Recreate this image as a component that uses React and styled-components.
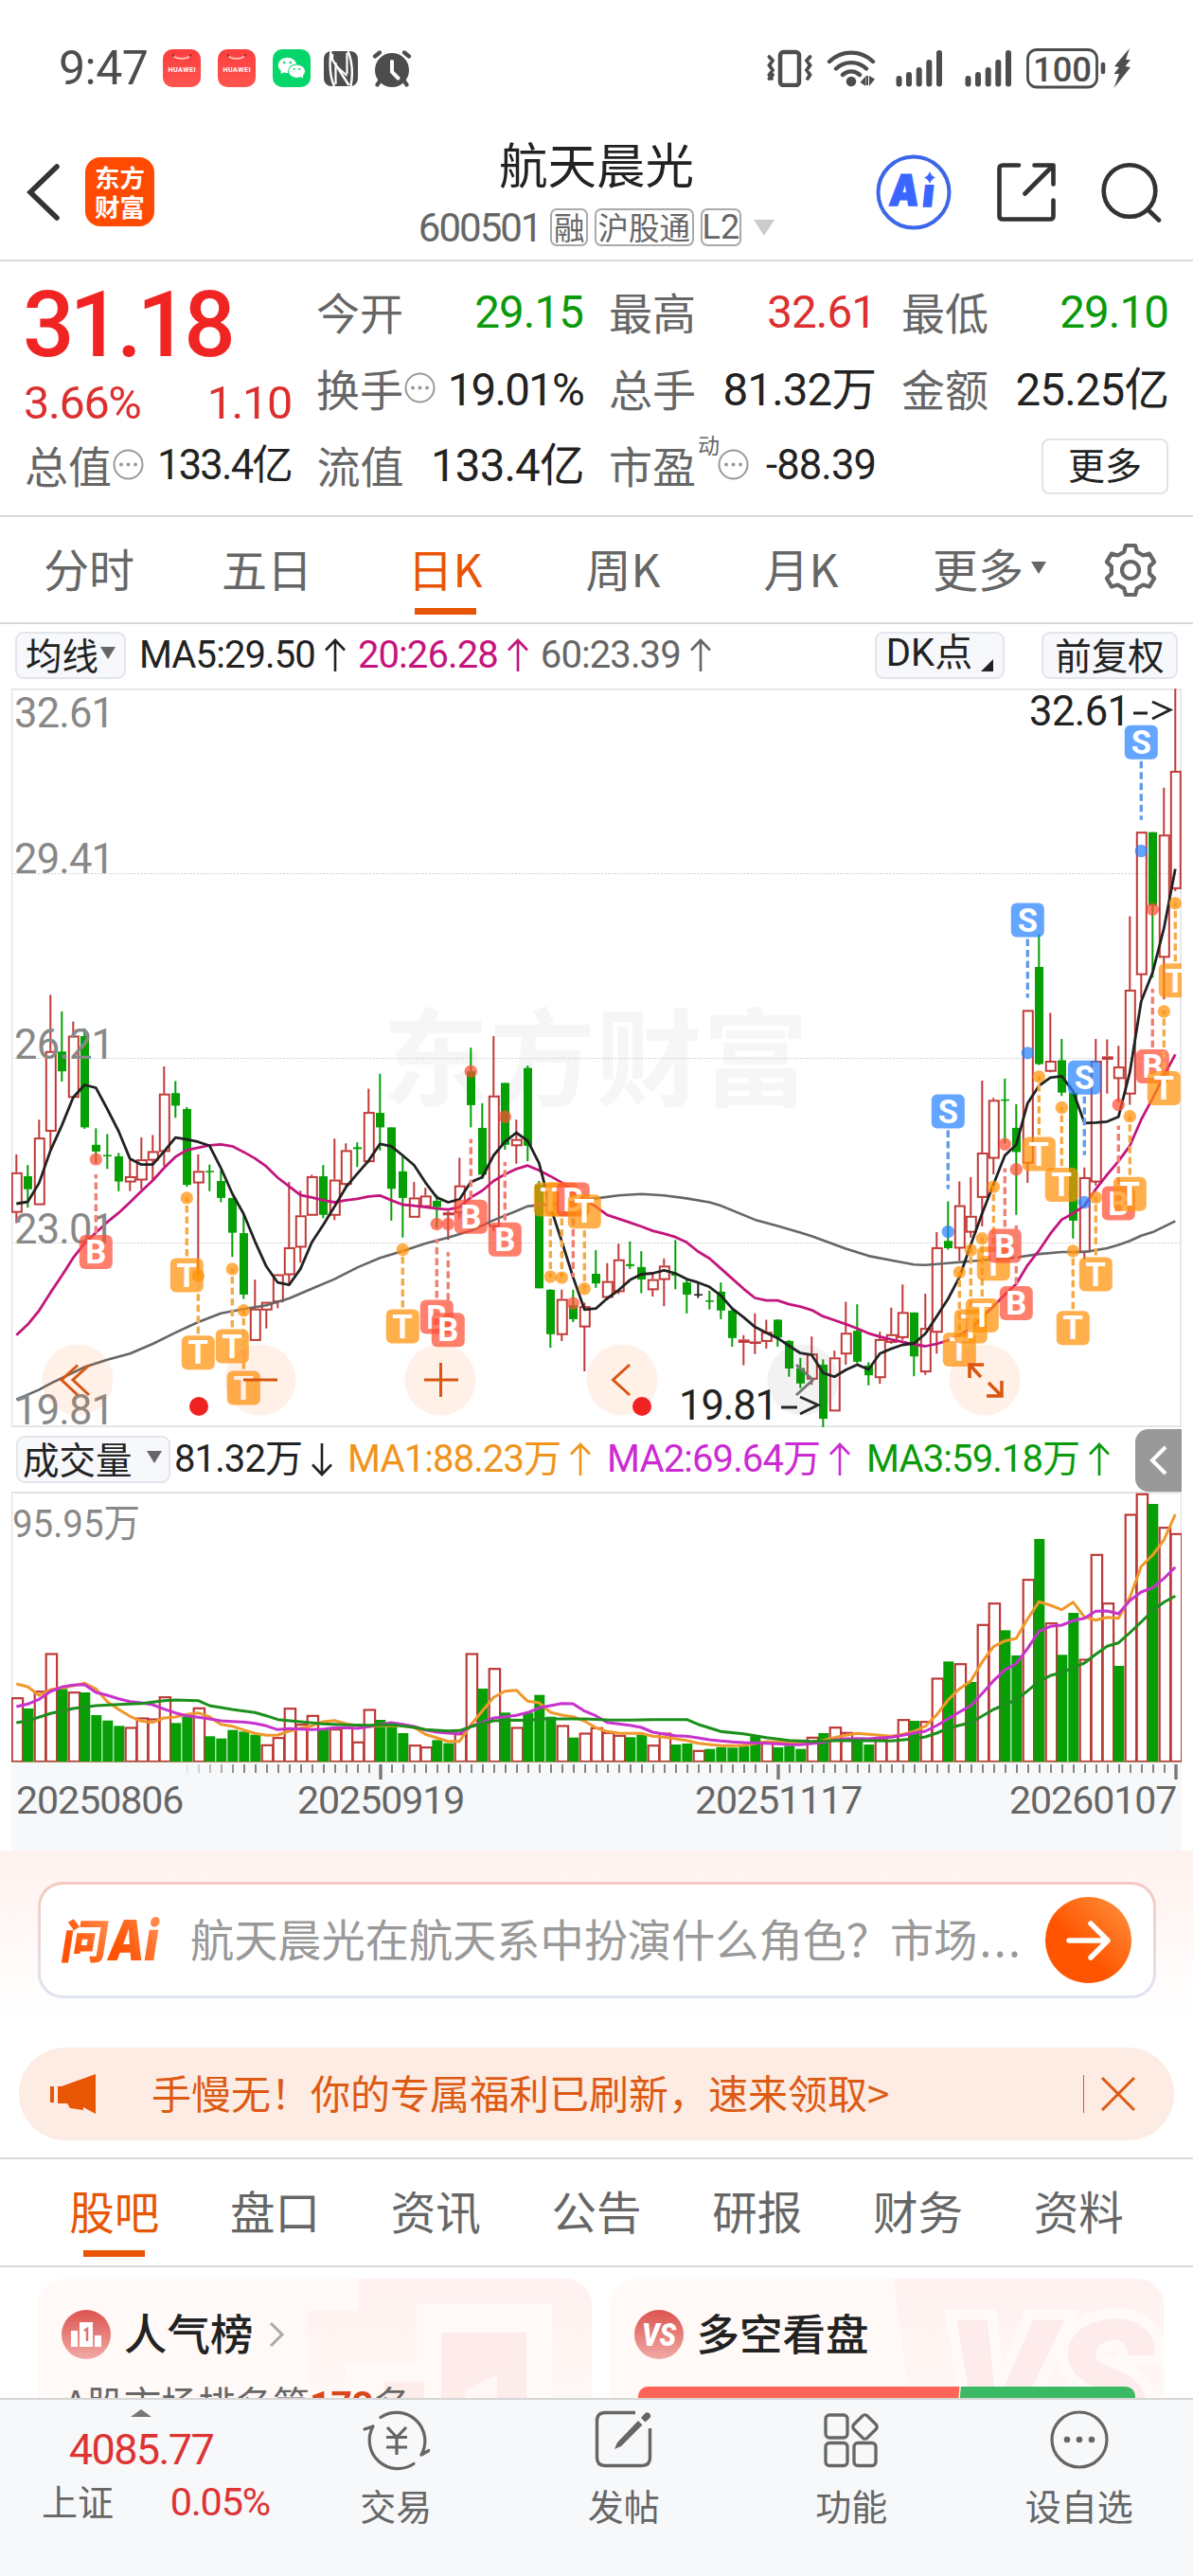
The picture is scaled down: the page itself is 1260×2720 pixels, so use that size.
import React from 'react'
import styled, { createGlobalStyle } from 'styled-components'

const cjk = `'Noto Sans CJK SC', sans-serif`
const latin = `Roboto, 'Noto Sans CJK SC', sans-serif`

const GREEN = '#0b9a0b'
const RED = '#dc3030'
const ORANGE = '#e85505'

const STEP = 12
const FIRST_X = 17.3
const xAt = (i) => FIRST_X + i * STEP
// candle values are stored in chart units, one unit is 1 / 1.96 px
const priceY = (v) => 720 + v / 1.96
const volumeY = (v) => 1500 + v / 3

// kind, high, body top, body bottom, low
const candles = `
r 978 1015 1098 1120|g 1000 1023 1050 1088|r 906 943 1082 1082|r 648 764 930 968|g 682 765 806 827|
r 703 732 860 860|g 717 733 922 925|g 924 958 972 996|g 936 979 982 1008|g 975 982 1034 1054|
r 990 1023 1035 1054|r 943 988 1031 1050|r 938 971 990 1033|r 796 852 972 1002|g 826 851 877 902|
g 880 884 1041 1045|r 978 1012 1037 1228|g 999 1012 1015 1054|g 1010 1033 1068 1077|g 1068 1068 1140 1190|
g 1100 1141 1268 1277|r 1237 1297 1363 1363|r 1283 1283 1300 1338|r 1225 1226 1283 1296|r 1035 1170 1227 1245|
r 1053 1104 1170 1202|r 1020 1023 1104 1104|g 1000 1023 1103 1110|r 945 1030 1104 1114|r 955 969 1040 1046|
g 953 963 967 1004|r 842 890 993 995|g 811 892 922 970|g 922 922 1049 1115|g 980 1013 1068 1150|
r 1035 1067 1108 1108|r 1047 1063 1086 1086|g 1062 1074 1087 1130|r 1095 1098 1103 1155|r 985 1042 1099 1110|
g 757 806 876 922|g 872 923 1020 1029|r 733 856 1127 1137|g 830 830 958 968|r 906 946 960 997|
g 794 799 960 992|g 1033 1040 1255 1255|g 1257 1258 1350 1378|r 1258 1277 1351 1364|g 1258 1290 1319 1325|
r 1285 1292 1335 1427|g 1176 1225 1245 1254|r 1203 1240 1274 1280|r 1163 1195 1262 1267|g 1158 1205 1209 1215|
g 1178 1211 1237 1265|r 1225 1236 1258 1272|r 1193 1208 1237 1292|g 1155 1225 1229 1257|g 1238 1243 1268 1307|
k 1243 1267 1270 1275|g 1260 1280 1283 1299|g 1243 1262 1301 1319|g 1297 1301 1358 1376|r 1352 1361 1367 1414|
r 1307 1365 1367 1391|r 1320 1345 1365 1380|g 1319 1320 1357 1376|g 1362 1364 1421 1438|g 1399 1420 1452 1462|
r 1355 1390 1443 1455|g 1402 1413 1525 1543|r 1384 1398 1509 1509|r 1283 1347 1391 1413|g 1288 1343 1407 1410|
g 1408 1415 1435 1456|r 1345 1360 1440 1453|r 1295 1350 1367 1370|r 1247 1304 1357 1362|g 1305 1305 1396 1437|
r 1266 1337 1428 1434|r 1139 1170 1346 1390|g 1075 1157 1172 1175|r 1034 1083 1172 1198|r 1025 1105 1139 1150|
r 825 974 1067 1127|r 861 865 986 1019|g 821 864 867 955|g 874 923 973 1103|r 678 679 996 1037|
g 522 590 791 793|r 685 784 806 808|g 739 783 850 857|g 850 850 1115 1152|r 1005 1025 1180 1195|
r 739 784 1035 1042|r 740 775 781 852|r 753 796 821 870|r 485 637 853 875|r 310 310 606 655|
g 311 311 463 612|r 219 316 570 657|r 14 184 428 433`
  .split('|')
  .map((row) => {
    const [kind, ...v] = row.trim().split(' ')
    return [kind, ...v.map(Number)]
  })

const volumes =
  `r878 g912 r857 r738 g850 r860 g861 g933 g950 g967 r972 r942 r945 r875 g958 g938 r910 g1000 g1007 g980 g985 g995
r1027 r1004 r911 r962 r934 g978 r977 r973 r1018 r915 g948 g965 g990 r1028 r1034 g1012 g1022 r992 r738 g849 r785 g925
r972 g925 g869 g938 r966 g1004 r990 r973 r988 r997 g1003 g995 r1028 r990 g1026 g1023 r1045 g1040 g1035 g1036 g1032
g1000 r1017 g1035 g1030 g1040 r1003 g990 r971 r988 g1015 g1026 r1010 r1000 r947 g951 r953 r816 g763 r770 g828 r646
r578 g664 g744 r503 g375 r641 g742 g609 r756 r424 r578 g777 r297 r232 g264 r338 r358`
    .split(/\s+/)
    .map((s) => [s[0], Number(s.slice(1))])

const ma5 = [
  1080, 1076, 1037, 970, 918, 860, 834, 840, 884, 930, 987, 999, 999, 972, 943, 947, 952, 960, 1006, 1059, 1101, 1158,
  1210, 1243, 1248, 1215, 1160, 1124, 1086, 1046, 1018, 991, 956, 961, 980, 1000, 1036, 1067, 1077, 1071, 1035, 1025,
  980, 952, 933, 950, 996, 1086, 1158, 1232, 1299, 1297, 1276, 1259, 1238, 1226, 1224, 1218, 1224, 1236, 1243, 1252,
  1270, 1297, 1315, 1335, 1347, 1358, 1374, 1389, 1393, 1430, 1438, 1424, 1413, 1423, 1390, 1380, 1372, 1369, 1349,
  1313, 1277, 1232, 1165, 1100, 1040, 980, 958, 872, 836, 819, 816, 847, 913, 912, 910, 900, 808, 661, 602, 510, 387,
].map((v, i) => [i, v])
const ma20 = [
  1352, 1330, 1301, 1264, 1229, 1192, 1162, 1140, 1118, 1099, 1077, 1054, 1032, 1006, 983, 969, 964, 959, 957, 961, 973,
  986, 1003, 1026, 1044, 1062, 1067, 1073, 1077, 1073, 1070, 1065, 1063, 1073, 1082, 1084, 1087, 1090, 1092, 1087, 1067,
  1053, 1033, 1019, 1008, 1001, 1011, 1023, 1036, 1054, 1072, 1086, 1103, 1111, 1119, 1127, 1136, 1142, 1149, 1160,
  1179, 1193, 1214, 1235, 1256, 1275, 1280, 1280, 1288, 1293, 1300, 1313, 1321, 1329, 1338, 1348, 1355, 1361, 1366, 1371,
  1375, 1370, 1363, 1352, 1338, 1315, 1292, 1268, 1246, 1207, 1177, 1142, 1113, 1100, 1084, 1050, 1020, 992, 960, 906,
  862, 815, 771,
].map((v, i) => [i, v])
const ma60 = [
  [0, 1485], [1, 1475], [2, 1465], [3, 1452], [6, 1418], [8, 1403], [10, 1390], [12, 1370], [14, 1347], [16, 1325],
  [18, 1307], [20, 1298], [22, 1290], [24, 1276], [26, 1256], [28, 1236], [30, 1212], [32, 1192], [34, 1178],
  [36, 1162], [38, 1150], [40, 1136], [42, 1114], [44, 1095], [45, 1085], [48, 1079], [51, 1069], [53, 1063],
  [55, 1060], [57, 1063], [59, 1069], [61, 1077], [62, 1084], [65, 1113], [67, 1126], [69, 1140], [70, 1147],
  [73, 1173], [75, 1188], [77, 1197], [79, 1206], [80, 1207], [82, 1203], [84, 1199], [86, 1195], [88, 1191],
  [90, 1184], [92, 1180], [94, 1180], [96, 1172], [97, 1165], [98, 1157], [99, 1146], [100, 1139], [102, 1116],
]
const vol5 = [
  834, 843, 870, 852, 847, 840, 832, 850, 890, 915, 937, 952, 956, 942, 939, 931, 926, 938, 962, 968, 980, 991, 997, 996,
  984, 975, 967, 954, 950, 960, 966, 970, 966, 967, 967, 972, 994, 1005, 1016, 1016, 964, 920, 877, 857, 854, 889, 894,
  924, 933, 938, 952, 973, 985, 990, 991, 991, 1000, 1003, 1008, 1013, 1022, 1026, 1030, 1030, 1029, 1023, 1017, 1018,
  1020, 1020, 1020, 1013, 1004, 997, 991, 994, 997, 1000, 994, 985, 968, 932, 885, 850, 825, 765, 716, 698, 690, 628,
  574, 585, 599, 575, 622, 632, 623, 626, 560, 462, 426, 378, 297,
].map((v, i) => [i, v])
const vol10 = [
  906, 898, 883, 858, 844, 838, 836, 861, 870, 881, 890, 894, 900, 914, 926, 935, 940, 945, 951, 953, 955, 959, 967,
  979, 976, 977, 979, 977, 973, 973, 975, 970, 962, 957, 962, 969, 980, 987, 990, 992, 968, 957, 942, 938, 934, 925, 910,
  903, 896, 897, 920, 935, 956, 961, 965, 972, 987, 993, 998, 1000, 1005, 1011, 1015, 1018, 1020, 1021, 1022, 1024, 1026,
  1027, 1023, 1019, 1012, 1008, 1007, 1008, 1005, 1003, 997, 990, 984, 966, 945, 923, 903, 865, 824, 790, 770, 722, 668,
  652, 648, 634, 626, 604, 603, 612, 570, 543, 530, 500, 464,
].map((v, i) => [i, v])
const vol20 = [
  [0, 957], [1, 951], [3, 928], [5, 912], [7, 903], [9, 899], [11, 896], [13, 887], [14, 885], [16, 887], [17, 903],
  [19, 915], [21, 925], [22, 935], [23, 947], [25, 954], [27, 961], [29, 964], [31, 965], [33, 963], [35, 972],
  [36, 979], [38, 983], [39, 982], [40, 970], [41, 960], [42, 951], [44, 949], [45, 950], [46, 945], [50, 945],
  [52, 948], [54, 949], [56, 947], [59, 947], [60, 962], [62, 985], [64, 992], [66, 1004], [68, 1013], [70, 1016],
  [72, 1014], [74, 1013], [77, 1015], [79, 1008], [80, 1002], [81, 990], [82, 975], [83, 965], [84, 957], [86, 915],
  [88, 885], [89, 856], [90, 826], [91, 808], [92, 798], [93, 783], [94, 768], [95, 740], [96, 715], [97, 704],
  [98, 672], [99, 638], [100, 602], [101, 575], [102, 556],
]

// letter, candle index, dot, badge centre
const signals = [
  ['B', 7, 988, 1180], ['T', 15, 1068, 1228], ['T', 16, 1229, 1388], ['T', 19, 1215, 1375], ['T', 20, 1301, 1461],
  ['T', 34, 1175, 1334], ['B', 37, 1122, 1314], ['B', 38, 1122, 1341], ['B', 40, 806, 1107], ['B', 43, 900, 1154],
  ['T', 47, 1231, 1071], ['T', 48, 1233, 1071], ['B', 49, 1286, 1071], ['T', 50, 1256, 1096], ['S', 82, 1138, 889],
  ['T', 83, 1222, 1382], ['T', 84, 1176, 1334], ['T', 85, 1152, 1311], ['T', 86, 1045, 1204], ['B', 87, 957, 1167],
  ['B', 88, 1009, 1286], ['S', 89, 768, 493], ['T', 90, 817, 977], ['T', 92, 881, 1041], ['T', 93, 1178, 1337],
  ['S', 94, 1077, 819], ['T', 95, 1067, 1226], ['B', 97, 875, 1079], ['T', 98, 899, 1060], ['S', 99, 350, 125],
  ['B', 100, 471, 796], ['T', 101, 682, 841], ['T', 102, 458, 618],
]
const signalColor = { B: '#ff4d35', T: '#ff9208', S: '#2782ff' }
const dashColor = { B: '#f07f74', T: '#f5ab45', S: '#639de8' }

const linePoints = (data, toY) => data.map(([i, v]) => `${xAt(i)},${toY(v).toFixed(1)}`).join(' ')

const Candle = ({ data, i }) => {
  const [kind, high, top, bottom, low] = data
  const x = xAt(i)
  const y1 = priceY(top)
  const h = Math.max(priceY(bottom) - y1, 1.5)
  if (kind === 'r') {
    return (
      <g stroke="#c03a38" strokeWidth="2" fill="none">
        <path d={`M${x} ${priceY(high)}V${y1}M${x} ${y1 + h}V${priceY(low)}`} />
        <rect x={x - 4.5} y={y1 + 1} width="10" height={Math.max(h - 1.5, 0.6)} />
      </g>
    )
  }
  const color = kind === 'k' ? '#222' : '#06a006'
  return (
    <g fill={color}>
      <rect x={x - 1} y={priceY(high)} width="2" height={priceY(low) - priceY(high)} />
      <rect x={x - 4.3} y={y1} width="9" height={h} />
    </g>
  )
}

const Signal = ({ data }) => {
  const [letter, i, dot, badge] = data
  const x = xAt(i)
  const dir = dot > badge ? 1 : -1
  const by = priceY(badge)
  return (
    <g>
      <path
        d={`M${x} ${by + dir * 20}V${by + dir * 82}`}
        stroke={dashColor[letter]}
        strokeWidth="3.4"
        strokeDasharray="7.5 4"
      />
      <circle cx={x} cy={priceY(dot)} r="6.7" fill={signalColor[letter]} opacity="0.72" />
      <rect
        x={x - 17.5}
        y={by - 18}
        width="35"
        height="36"
        rx="6"
        fill={signalColor[letter]}
        opacity="0.72"
      />
      <text x={x} y={by + 12.3} textAnchor="middle" fontSize="34.5" fontWeight="700" fill="#fff" fontFamily="Roboto">
        {letter}
      </text>
    </g>
  )
}

const PriceChart = () => (
  <svg width="1236" height="780" viewBox="12 727 1236 780">
    <text x="404" y="1160" fontSize="112" fontWeight="700" fill="#f6f6f6" fontFamily="Noto Sans CJK SC" textLength="450">
      东方财富
    </text>
    {[922.5, 1117.5, 1312.5].map((y) => (
      <path key={y} d={`M12 ${y}H1248`} stroke="#d2d2d2" strokeDasharray="2 1.5" />
    ))}
    <path d="M12.5 727V1507M1247 727V1507" stroke="#e2e2e2" strokeWidth="1.5" />
    <path d="M12 727.8H1248M12 1506.3H1248" stroke="#e2e2e2" strokeWidth="2" />
    {candles.map((c, i) => (
      <Candle key={i} data={c} i={i} />
    ))}
    <g fill="none" strokeLinejoin="round">
      <polyline points={linePoints(ma60, priceY)} stroke="#666" strokeWidth="2.6" />
      <polyline points={linePoints(ma20, priceY)} stroke="#c4157d" strokeWidth="2.8" />
      <polyline points={linePoints(ma5, priceY)} stroke="#222" strokeWidth="2.8" />
    </g>
    <g fontSize="43.5" fill="#888" fontFamily="Roboto">
      {[['32.61', 768], ['29.41', 922], ['26.21', 1118], ['23.01', 1313], ['19.81', 1504]].map(([t, y]) => (
        <text key={t} x="15" y={y} textLength="106">
          {t}
        </text>
      ))}
    </g>
    {signals.map((s, i) => (
      <Signal key={i} data={s} />
    ))}
    <g fontSize="43.5" fill="#222" fontFamily="Roboto">
      <text x="1087" y="766" textLength="107">32.61</text>
      <text x="717" y="1499" textLength="105">19.81</text>
    </g>
    <path d="M1197 753H1212M1217 741L1236 749.500L1217 759M825 1486H842M845 1475L864 1483.500L845 1493" fill="none" stroke="#222" strokeWidth="2.8" />
    {[82, 275, 465, 657, 1040].map((x) => (
      <circle key={x} cx={x} cy="1457" r="37.5" fill="#ff6a1c" opacity="0.1" />
    ))}
    <circle cx="848" cy="1457" r="37.500" fill="#555" opacity="0.08" />
    <g fill="none" stroke="#d8560f" strokeWidth="3">
      <path d="M82 1441.500L65 1457L82 1473M94 1441.500L77 1457L94 1473" />
      <path d="M257 1457H293M448 1457H484M465.500 1439V1475" />
      <path d="M665 1441L647.500 1457L665 1473" />
      <path d="M1024 1455V1441H1039M1024 1441L1036 1454M1058 1458V1474H1042M1058 1474L1044 1460" strokeWidth="3.5" />
    </g>
    <path d="M841 1441L858.500 1457L841 1473" fill="none" stroke="#777" strokeWidth="3" />
    <circle cx="210" cy="1485" r="10" fill="#f02222" />
    <circle cx="678" cy="1485" r="10" fill="#f02222" />
  </svg>
)

const VolumeChart = () => (
  <svg width="1236" height="286" viewBox="12 1575 1236 286">
    <path d="M12 1576H1248" stroke="#e2e2e2" strokeWidth="2" />
    <path d="M12.500 1576V1861M1247.500 1576V1861" stroke="#e2e2e2" strokeWidth="1.500" />
    {volumes.map(([kind, v], i) =>
      kind === 'r' ? (
        <rect
          key={i}
          x={xAt(i) - 4.6}
          y={volumeY(v) + 0.5}
          width="11.4"
          height={1859.5 - volumeY(v)}
          fill="#fff"
          stroke="#bc3a38"
          strokeWidth="2.2"
        />
      ) : (
        <rect key={i} x={xAt(i) - 5} y={volumeY(v)} width="11" height={1860 - volumeY(v)} fill="#06a006" />
      )
    )}
    <path d="M12 1860.500H1248" stroke="#b08a68" strokeWidth="1" />
    <g fill="none" strokeWidth="3" strokeLinejoin="round">
      <polyline points={linePoints(vol5, volumeY)} stroke="#f0982a" />
      <polyline points={linePoints(vol10, volumeY)} stroke="#c733cc" />
      <polyline points={linePoints(vol20, volumeY)} stroke="#1c8f1c" />
    </g>
    <text x="13" y="1623" fontSize="41" fill="#888" fontFamily="Roboto, Noto Sans CJK SC" textLength="135" lengthAdjust="spacingAndGlyphs">
      95.95万
    </text>
  </svg>
)

const Ticks = () => (
  <svg width="1236" height="22" viewBox="12 1861 1236 22">
    {Array.from({ length: 88 }, (_, k) => k + 15).map((i) => {
      const big = i === 32 || i === 67 || i === 102
      return (
        <path
          key={i}
          d={`M${xAt(i) + 0.7} 1863V${big ? 1879 : 1872}`}
          stroke="#777"
          strokeWidth={big ? 3.4 : 1.8}
          opacity={Math.min(1, (i - 14) / 6)}
        />
      )
    })}
  </svg>
)

const Arrow = ({ color, down }) => (
  <svg width="22" height="36" viewBox="0 0 22 36">
    <path
      d={down ? 'M11 1V34M1 23.500L11 34L21 23.500' : 'M11 35V2M1 12.500L11 2L21 12.500'}
      fill="none"
      stroke={color}
      strokeWidth="2.6"
    />
  </svg>
)

const Info = () => (
  <svg width="33" height="33" viewBox="0 0 33 33">
    <circle cx="16.500" cy="16.500" r="15" fill="none" stroke="#999" strokeWidth="2" />
    <g fill="#999">
      <circle cx="9" cy="16.500" r="2" />
      <circle cx="16.500" cy="16.500" r="2" />
      <circle cx="24" cy="16.500" r="2" />
    </g>
  </svg>
)

const HuaweiIcon = () => (
  <svg width="40" height="40" viewBox="0 0 40 40">
    <defs>
      <linearGradient id="hw" x1="0" y1="0" x2="0" y2="1">
        <stop offset="0" stopColor="#fb3f3d" />
        <stop offset="1" stopColor="#ff5550" />
      </linearGradient>
    </defs>
    <rect width="40" height="40" rx="10" fill="url(#hw)" />
    <path d="M11 6.500C14 11 26 11 29 6.500" fill="none" stroke="#ffc4c0" strokeWidth="1.600" />
    <circle cx="11" cy="6.500" r="1.400" fill="#b52a2a" />
    <circle cx="29" cy="6.500" r="1.400" fill="#b52a2a" />
    <text x="20" y="24" textAnchor="middle" fontSize="7.200" fontWeight="700" fill="#fff" fontFamily="Roboto" textLength="29">
      HUAWEI
    </text>
  </svg>
)

const WechatIcon = () => (
  <svg width="40" height="40" viewBox="0 0 40 40">
    <rect width="40" height="40" rx="10" fill="#05d66b" />
    <path d="M9 21L8.500 26L13 24Z" fill="#fff" />
    <ellipse cx="15.500" cy="17" rx="9.800" ry="8.300" fill="#fff" />
    <ellipse cx="25.500" cy="23.200" rx="9.500" ry="7.800" fill="#05d66b" />
    <ellipse cx="25.500" cy="23.200" rx="8.500" ry="6.800" fill="#fff" />
    <path d="M29 28L32 31L32 26Z" fill="#fff" />
    <g fill="#05d66b">
      <circle cx="12.200" cy="14" r="1.300" />
      <circle cx="18.800" cy="14" r="1.300" />
      <circle cx="22.800" cy="21" r="1.100" />
      <circle cx="28.300" cy="21" r="1.100" />
    </g>
  </svg>
)

const NfcIcon = () => (
  <svg width="36" height="37" viewBox="0 0 36 37">
    <rect width="36" height="37" rx="8" fill="#4d4d4d" />
    <path d="M7.500 0C6 12 6 26 11 37M9 3V9L26.500 36M25.500 0C30.500 12 30.500 26 28.500 37" fill="none" stroke="#fff" strokeWidth="2.400" />
    <path d="M12.500 12V35M24.500 2V24" stroke="#fff" strokeWidth="2.200" />
    <path d="M12.500 15L24.500 26" stroke="#fff" strokeWidth="1.800" />
  </svg>
)

const AlarmIcon = () => (
  <svg width="42" height="40" viewBox="0 0 42 40">
    <circle cx="21" cy="22" r="18" fill="#4d4d4d" />
    <g stroke="#4d4d4d" strokeWidth="4.200" strokeLinecap="round" fill="none">
      <path d="M3 7.500L8 3.500M39 7.500L34 3.500M8.500 33L5.500 37.500M33.500 33L36.500 37.500" />
    </g>
    <path d="M21 13V24L27.500 30.500" stroke="#fff" strokeWidth="4" strokeLinecap="round" fill="none" />
  </svg>
)

const VibrateIcon = () => (
  <svg width="48" height="40" viewBox="0 0 48 40">
    <rect x="14" y="3" width="20" height="35" rx="3.500" fill="none" stroke="#4d4d4d" strokeWidth="4.500" />
    <path d="M2.500 8L6 12L2.500 17L6 22L2.500 27L5 31M2.500 31L6 27M45.500 8L42 12L45.500 17L42 22L45.500 27L43 31" fill="none" stroke="#4d4d4d" strokeWidth="3.800" strokeLinecap="round" />
  </svg>
)

const WifiIcon = () => (
  <svg width="52" height="40" viewBox="0 0 52 40">
    <g fill="none" stroke="#4d4d4d" strokeWidth="4.400" strokeLinecap="round">
      <path d="M3 13C16 .5 36 .5 49 13M10 20.500C19 12 33 12 42 20.500M17 27C22.500 22.300 29.500 22.300 35 27" />
    </g>
    <circle cx="26" cy="34" r="5.300" fill="#4d4d4d" />
    <path d="M41.500 28V39L35.500 35ZM45 28L51 31.500L45 39ZM42 28H44V38H42Z" fill="#4d4d4d" />
  </svg>
)

const SignalIcon = () => (
  <svg width="50" height="40" viewBox="0 0 50 40">
    <path d="M3.500 31V36.500M14 27V36.500M24.700 22V36.500M35.300 14V36.500M46 4V36.500" stroke="#4d4d4d" strokeWidth="6" strokeLinecap="round" />
  </svg>
)

const BatteryIcon = () => (
  <svg width="112" height="43" viewBox="0 0 112 43">
    <rect x="1.500" y="1.500" width="73" height="39.500" rx="9.500" fill="none" stroke="#4d4d4d" strokeWidth="2.800" />
    <path d="M81 17V25" stroke="#4d4d4d" strokeWidth="4.500" strokeLinecap="round" />
    <text x="38" y="34.500" textAnchor="middle" fontSize="36.500" fontWeight="500" fill="#4d4d4d" fontFamily="Roboto" textLength="62" lengthAdjust="spacingAndGlyphs">
      100
    </text>
    <path d="M109 0L93 19L98 20L92.500 27H98L92.500 42L110 20L104.500 19L110 12H105Z" fill="#4d4d4d" />
  </svg>
)

const AiIcon = () => (
  <svg width="80" height="80" viewBox="0 0 80 80">
    <circle cx="40" cy="40" r="37.500" fill="none" stroke="#3d66e8" strokeWidth="4" />
    <g fill="#3a66ff" stroke="#3a66ff" strokeWidth="1.500" fontFamily="Inter" fontWeight="900" transform="skewX(-6)">
      <text x="19" y="54.500" fontSize="45" textLength="31" lengthAdjust="spacingAndGlyphs">A</text>
      <text x="54" y="55.500" fontSize="41" textLength="12" lengthAdjust="spacingAndGlyphs">ı</text>
    </g>
    <path d="M57 18Q58.500 23 63 24.500Q58.500 26 57 31Q55.500 26 51 24.500Q55.500 23 57 18Z" fill="#3a66ff" />
  </svg>
)

const ShareIcon = () => (
  <svg width="62" height="62" viewBox="0 0 62 62">
    <g fill="none" stroke="#333" strokeWidth="4.600" strokeLinecap="round" strokeLinejoin="round">
      <path d="M23 2.500H6Q2.500 2.500 2.500 6V56Q2.500 59.500 6 59.500H56Q59.500 59.500 59.500 56V39.500M39.500 2.500H59.500V22.500M59 3L29.500 32.500" />
    </g>
  </svg>
)

const SearchIcon = () => (
  <svg width="64" height="64" viewBox="0 0 64 64">
    <g fill="none" stroke="#333" strokeWidth="4.600" strokeLinecap="round">
      <circle cx="30" cy="30.500" r="27.300" />
      <path d="M49 50L61 61.500" />
    </g>
  </svg>
)

const gearPath = (() => {
  const pts = []
  for (let k = 0; k < 6; k++) {
    const a = -90 + k * 60
    ;[[20.5, -19], [26.5, -11], [26.5, 11], [20.5, 19]].forEach(([r, d]) => {
      const t = ((a + d) * Math.PI) / 180
      pts.push(`${(29 + r * Math.cos(t)).toFixed(1)},${(29 + r * Math.sin(t)).toFixed(1)}`)
    })
  }
  return `M${pts.join('L')}Z`
})()

const GearIcon = () => (
  <svg width="58" height="58" viewBox="0 0 58 58">
    <g fill="none" stroke="#666" strokeWidth="4.200" strokeLinejoin="round">
      <path d={gearPath} />
      <circle cx="29" cy="29" r="9" />
    </g>
  </svg>
)

const AskLogo = () => (
  <svg width="106" height="50" viewBox="0 0 106 50">
    <defs>
      <linearGradient id="ask" x1="0" y1="1" x2="1" y2="0">
        <stop offset="0.300" stopColor="#ff5303" />
        <stop offset="1" stopColor="#ff9a63" />
      </linearGradient>
    </defs>
    <g transform="skewX(-9)" fill="url(#ask)" fontWeight="900">
      <text x="4.500" y="43.500" fontSize="49" fontFamily="Noto Sans CJK SC">问</text>
      <text x="54" y="46" fontSize="59" fontFamily="Inter" textLength="53" lengthAdjust="spacingAndGlyphs">Ai</text>
    </g>
  </svg>
)

const MegaphoneIcon = () => (
  <svg width="50" height="44" viewBox="0 0 50 44">
    <path d="M1 14H5V31H1ZM9 14H13L49 1V43L36 36V39L22 37L19 32H9Z" fill={ORANGE} />
  </svg>
)

const TradeIcon = () => (
  <svg width="72" height="66" viewBox="0 0 72 66">
    <g fill="none" stroke="#666" strokeWidth="3.200" strokeLinecap="round" strokeLinejoin="round">
      <path d="M20 9.500A30 30 0 0 1 63 49M63 49L71 44.500" />
      <path d="M55 58.500A30 30 0 0 1 12 19M12 19L3 22" />
      <path d="M27 20L37 30.500L47 20M26 30.500H48M26 41H48M37 30.500V49" strokeLinecap="butt" />
    </g>
  </svg>
)

const PostIcon = () => (
  <svg width="62" height="62" viewBox="0 0 62 62">
    <path d="M43 2.500H11Q2.500 2.500 2.500 11V50Q2.500 58.500 11 58.500H50Q58.500 58.500 58.500 50V19" fill="none" stroke="#666" strokeWidth="3.400" />
    <path d="M46 11L50.500 15.500L28 38L21 41L24 34ZM49 8L53 3.500Q56 1 58 3.500Q60.500 6 58 8.500L53.500 12.500Z" fill="#666" />
  </svg>
)

const AppsIcon = () => (
  <svg width="60" height="60" viewBox="0 0 60 60">
    <g fill="none" stroke="#666" strokeWidth="3.300">
      <rect x="3" y="4" width="23" height="24" rx="4" />
      <rect x="3" y="33.500" width="23" height="24" rx="4" />
      <rect x="33" y="33.500" width="23" height="24" rx="4" />
      <rect x="34.500" y="6.500" width="20" height="20" rx="3.500" transform="rotate(45 44.500 16.500)" />
    </g>
  </svg>
)

const MoreIcon = () => (
  <svg width="62" height="62" viewBox="0 0 62 62">
    <circle cx="31" cy="31" r="29" fill="none" stroke="#666" strokeWidth="3.200" />
    <g fill="#666">
      <circle cx="18" cy="31" r="3.300" />
      <circle cx="31" cy="31" r="3.300" />
      <circle cx="44" cy="31" r="3.300" />
    </g>
  </svg>
)

const RankIcon = () => (
  <svg width="52" height="52" viewBox="0 0 52 52">
    <defs>
      <linearGradient id="badge" x1="0" y1="0" x2="0" y2="1">
        <stop offset="0" stopColor="#dc5450" />
        <stop offset="1" stopColor="#f0aaa6" />
      </linearGradient>
    </defs>
    <circle cx="26" cy="26" r="26" fill="url(#badge)" />
    <path d="M10 22H17V39H10ZM19 13H33V39H19ZM35 27H42V39H35Z" fill="#fff" />
    <path d="M24 22L27 20V33" fill="none" stroke="#e0746f" strokeWidth="2.500" />
  </svg>
)

const VsIcon = () => (
  <svg width="52" height="52" viewBox="0 0 52 52">
    <circle cx="26" cy="26" r="26" fill="url(#badge)" />
    <text x="8" y="38" fontSize="33" fontWeight="900" fontStyle="italic" fill="#fff" fontFamily="Roboto" textLength="36" lengthAdjust="spacingAndGlyphs">
      VS
    </text>
  </svg>
)

const RankArt = () => (
  <svg width="300" height="130" viewBox="325 2406 300 130">
    <defs>
      <linearGradient id="fade" x1="0" y1="0" x2="0" y2="1">
        <stop offset="0" stopColor="#fff1ef" />
        <stop offset="1" stopColor="#fff8f6" />
      </linearGradient>
    </defs>
    <path d="M379 2406H625V2536H325V2440H379Z" fill="url(#fade)" />
    <path d="M440 2432H583V2536H365V2494H440Z" fill="#fff9f7" />
    <path d="M466 2463H556V2536H466ZM406 2515H448V2536H406Z" fill="#fdecea" />
    <path d="M491 2524L525 2507V2536H491Z" fill="#fff7f5" />
  </svg>
)

const VsArt = () => (
  <svg width="290" height="130" viewBox="940 2406 290 130">
    <path d="M945 2406H1230V2536H962Z" fill="url(#fade)" />
    <text x="1000" y="2575" fontSize="176" fontWeight="900" fontStyle="italic" fill="#fdeceb" stroke="#fffaf8" strokeWidth="22" paintOrder="stroke" fontFamily="Roboto" textLength="220" lengthAdjust="spacingAndGlyphs">
      VS
    </text>
  </svg>
)

const quotes = [
  [
    { label: '今开', value: '29.15', color: GREEN },
    { label: '最高', value: '32.61', color: RED },
    { label: '最低', value: '29.10', color: GREEN },
  ],
  [
    { label: '换手', info: true, value: '19.01%', tight: true },
    { label: '总手', value: '81.32万' },
    { label: '金额', value: '25.25亿' },
  ],
]
const periods = ['分时', '五日', '日K', '周K', '月K']
const sections = ['股吧', '盘口', '资讯', '公告', '研报', '财务', '资料']
const navItems = [
  ['交易', TradeIcon],
  ['发帖', PostIcon],
  ['功能', AppsIcon],
  ['设自选', MoreIcon],
]

const Cell = ({ item }) => (
  <QuoteCell>
    <QuoteLabel>
      {item.label}
      {item.sup && <Sup>{item.sup}</Sup>}
      {item.info && <Info />}
    </QuoteLabel>
    <QuoteValue $color={item.color} $small={item.small} $tight={item.tight}>
      {item.value}
    </QuoteValue>
  </QuoteCell>
)

const App = () => (
  <>
    <GlobalStyle />
    <Page>
      <StatusBar>
        <Clock>9:47</Clock>
        <StatusIcons $gap="18px">
          <HuaweiIcon />
          <HuaweiIcon />
          <WechatIcon />
        </StatusIcons>
        <StatusIcons $gap="15px" $left="14px">
          <NfcIcon />
          <AlarmIcon />
        </StatusIcons>
        <StatusRight>
          <VibrateIcon />
          <WifiIcon />
          <SignalIcon />
          <SignalIcon />
          <BatteryIcon />
        </StatusRight>
      </StatusBar>

      <Header>
        <HeaderSide>
          <svg width="36" height="60" viewBox="0 0 36 60">
            <path d="M32 3L4 30L32 57" fill="none" stroke="#333" strokeWidth="5.500" strokeLinecap="round" />
          </svg>
          <AppLogo>
            <span>东方</span>
            <span>财富</span>
          </AppLogo>
        </HeaderSide>
        <TitleBlock>
          <Title>航天晨光</Title>
          <SubTitle>
            <Code>600501</Code>
            <Tag>融</Tag>
            <Tag>沪股通</Tag>
            <Tag $latin>L2</Tag>
            <Triangle $w={11} $h={17} $color="#ccc" $left={6} />
          </SubTitle>
        </TitleBlock>
        <HeaderSide $right>
          <AiIcon />
          <ShareIcon />
          <SearchIcon />
        </HeaderSide>
      </Header>

      <Quote>
        <PriceColumn>
          <Price>31.18</Price>
          <Change>
            <span>3.66%</span>
            <span>1.10</span>
          </Change>
        </PriceColumn>
        <QuoteGrid>
          {quotes.flat().map((item) => (
            <Cell key={item.label} item={item} />
          ))}
        </QuoteGrid>
        <BottomRow>
          <Cell item={{ label: '总值', info: true, value: '133.4亿', small: true, tight: true }} />
          <Cell item={{ label: '流值', value: '133.4亿' }} />
          <Cell item={{ label: '市盈', sup: '动', info: true, value: '-88.39', small: true }} />
          <MoreButton>更多</MoreButton>
        </BottomRow>
      </Quote>

      <Periods>
        {periods.map((name) => (
          <Period key={name} $active={name === '日K'}>
            {name}
          </Period>
        ))}
        <Period $wide>
          更多
          <Triangle $w={8} $h={13} $color="#666" $left={8} />
        </Period>
        <GearBox>
          <GearIcon />
        </GearBox>
      </Periods>

      <IndicatorRow>
        <SmallButton $w="117px">
          均线
          <Triangle $w={8} $h={13} $color="#666" $left={2} />
        </SmallButton>
        <Indicator $color="#222" $left="14px">
          <span>MA5:29.50</span>
          <Arrow color="#222" />
        </Indicator>
        <Indicator $color="#c4157d" $left="13px">
          <span>20:26.28</span>
          <Arrow color="#c4157d" />
        </Indicator>
        <Indicator $color="#666" $left="13px">
          <span>60:23.39</span>
          <Arrow color="#666" />
        </Indicator>
        <ButtonGroup>
          <SmallButton $w="137px">
            <Indicator $color="#222" $loose>
              DK点
            </Indicator>
            <Corner />
          </SmallButton>
          <SmallButton $w="144px">前复权</SmallButton>
        </ButtonGroup>
      </IndicatorRow>

      <ChartBox>
        <PriceChart />
      </ChartBox>

      <VolumeRow>
        <SmallButton $w="163px" $start>
          成交量
          <Triangle $w={8} $h={13} $color="#666" $left={15} />
        </SmallButton>
        <Indicator $color="#222" $left="4px">
          <span>81.32万</span>
          <Arrow color="#222" down />
        </Indicator>
        <Indicator $color="#f0931c" $left="16px">
          <span>MA1:88.23万</span>
          <Arrow color="#f0931c" />
        </Indicator>
        <Indicator $color="#cb2bd3" $left="17px">
          <span>MA2:69.64万</span>
          <Arrow color="#cb2bd3" />
        </Indicator>
        <Indicator $color={GREEN} $left="17px">
          <span>MA3:59.18万</span>
          <Arrow color={GREEN} />
        </Indicator>
        <Collapse>
          <svg width="20" height="32" viewBox="0 0 20 32">
            <path d="M17 2L3 16L17 30" fill="none" stroke="#fff" strokeWidth="4" />
          </svg>
        </Collapse>
      </VolumeRow>

      <ChartBox>
        <VolumeChart />
      </ChartBox>

      <Axis>
        <Ticks />
        <AxisLabels>
          <AxisLabel>20250806</AxisLabel>
          <AxisLabel $left="121px">20250919</AxisLabel>
          <AxisLabel $left="244px">20251117</AxisLabel>
          <AxisLabel $left="156px">20260107</AxisLabel>
        </AxisLabels>
      </Axis>

      <AskSection>
        <AskCard>
          <AskLogo />
          <AskText>
            航天晨光在航天系中扮演什么角色？市场<Dots>...</Dots>
          </AskText>
          <AskButton>
            <svg width="50" height="44" viewBox="0 0 50 44">
              <path d="M4 22H44M27 4L45 22L27 40" fill="none" stroke="#fff" strokeWidth="5.500" strokeLinecap="round" strokeLinejoin="round" />
            </svg>
          </AskButton>
        </AskCard>
      </AskSection>

      <Notice>
        <MegaphoneIcon />
        <NoticeText>手慢无！你的专属福利已刷新，速来领取&gt;</NoticeText>
        <NoticeDivider />
        <svg width="36" height="36" viewBox="0 0 36 36">
          <path d="M1 1L35 35M35 1L1 35" stroke="#dd5a14" strokeWidth="3" />
        </svg>
      </Notice>

      <Sections>
        {sections.map((name) => (
          <Section key={name} $active={name === '股吧'}>
            {name}
          </Section>
        ))}
      </Sections>

      <Cards>
        <Card>
          <CardArt>
            <RankArt />
          </CardArt>
          <CardHead>
            <RankIcon />
            <CardTitle>人气榜</CardTitle>
            <svg width="18" height="28" viewBox="0 0 18 28">
              <path d="M2 2L14 14L2 26" fill="none" stroke="#aaa" strokeWidth="3" />
            </svg>
          </CardHead>
          <RankLine>
            A股市场排名第<b>173</b>名
          </RankLine>
        </Card>
        <Card>
          <CardArt>
            <VsArt />
          </CardArt>
          <CardHead>
            <VsIcon />
            <CardTitle>多空看盘</CardTitle>
          </CardHead>
          <VoteBar>
            <Vote $grow={338} $color="#ff6257" />
            <Vote $grow={186} $color="#3cb963" />
          </VoteBar>
        </Card>
      </Cards>

      <Nav>
        <IndexBox>
          <UpMark />
          <IndexValue>4085.77</IndexValue>
          <IndexRow>
            <IndexName>上证</IndexName>
            <IndexChange>0.05%</IndexChange>
          </IndexRow>
        </IndexBox>
        {navItems.map(([name, Icon]) => (
          <NavItem key={name}>
            <NavIcon>
              <Icon />
            </NavIcon>
            {name}
          </NavItem>
        ))}
      </Nav>
    </Page>
  </>
)

const GlobalStyle = createGlobalStyle`
  * {
    box-sizing: border-box;
  }
  body {
    margin: 0;
    background: #fff;
    font-family: ${cjk};
  }
  svg {
    display: block;
    flex-shrink: 0;
  }
`

const Page = styled.main`
  width: 1260px;
  height: 2720px;
  overflow: hidden;
  display: flex;
  flex-direction: column;
  background: #fff;
  > * {
    flex-shrink: 0;
  }
`

const StatusBar = styled.div`
  height: 140px;
  padding: 4px 64px 0 62px;
  display: flex;
  align-items: center;
  font-family: ${latin};
  color: #4d4d4d;
`

const Clock = styled.div`
  width: 110px;
  font-size: 50px;
  line-height: 50px;
  letter-spacing: -0.5px;
`

const StatusIcons = styled.div`
  display: flex;
  align-items: center;
  gap: ${({ $gap }) => $gap};
  margin-left: ${({ $left }) => $left || 0};
`

const StatusRight = styled.div`
  display: flex;
  align-items: center;
  margin-left: auto;
  gap: 15px;
  > :nth-child(3) {
    margin-left: 6px;
  }
  > :nth-child(4) {
    margin-left: 8px;
  }
`

const Header = styled.header`
  height: 136px;
  border-bottom: 2px solid #d9d9d9;
  display: flex;
  justify-content: space-between;
`

const HeaderSide = styled.div`
  width: 360px;
  height: 125px;
  padding: ${({ $right }) => ($right ? '0 33px 0 0' : '0 0 0 28px')};
  display: flex;
  align-items: center;
  justify-content: ${({ $right }) => ($right ? 'flex-end' : 'flex-start')};
  gap: ${({ $right }) => ($right ? '48px' : '26px')};
`

const AppLogo = styled.div`
  width: 73px;
  height: 73px;
  padding-bottom: 2px;
  border-radius: 16px;
  background: #ff4a02;
  color: #fff;
  font-size: 26.5px;
  font-weight: 700;
  line-height: 31px;
  display: flex;
  flex-direction: column;
  align-items: center;
  justify-content: center;
`

const TitleBlock = styled.div`
  display: flex;
  flex-direction: column;
  align-items: center;
`

const Title = styled.h1`
  margin: 2px 0 0 0;
  font-size: 51.5px;
  line-height: 60px;
  font-weight: 400;
  color: #222;
`

const SubTitle = styled.div`
  display: flex;
  align-items: center;
  gap: 7px;
  margin-top: 17px;
  height: 42px;
`

const Code = styled.span`
  font-family: ${latin};
  font-size: 42px;
  color: #666;
  letter-spacing: -2px;
  margin-right: 3px;
`

const Tag = styled.span`
  height: 40px;
  padding: ${({ $latin }) => ($latin ? '0' : '0 1.5px')};
  border: 2px solid #aaa;
  border-radius: 7px;
  font-family: ${({ $latin }) => ($latin ? latin : cjk)};
  font-size: ${({ $latin }) => ($latin ? '36px' : '32.5px')};
  line-height: ${({ $latin }) => ($latin ? '37px' : '33px')};
  color: #666;
`

const Triangle = styled.i`
  border: ${({ $w }) => $w}px solid transparent;
  border-top: ${({ $h }) => $h}px solid ${({ $color }) => $color};
  border-bottom: 0;
  margin-left: ${({ $left }) => $left}px;
`

const Quote = styled.section`
  height: 270px;
  border-bottom: 2px solid #d9d9d9;
  padding: 13px 26px 0 26px;
  display: grid;
  grid-template-columns: 282px 1fr;
  grid-template-rows: 163px 80px;
  column-gap: 26px;
`

const PriceColumn = styled.div`
  display: flex;
  flex-direction: column;
  color: ${RED};
  font-family: ${latin};
`

const Price = styled.div`
  margin-left: -2px;
  font-size: 96px;
  line-height: 108px;
  font-weight: 500;
  letter-spacing: -5px;
  color: #f12424;
`

const Change = styled.div`
  margin-left: -1px;
  display: flex;
  justify-content: space-between;
  font-size: 48.5px;
  line-height: 58px;
  letter-spacing: -1.3px;
`

const QuoteGrid = styled.div`
  display: grid;
  grid-template-columns: repeat(3, 282px);
  grid-template-rows: 82px 81px;
  column-gap: 27px;
`

const BottomRow = styled.div`
  grid-column: 1 / -1;
  display: grid;
  grid-template-columns: 282px 282px 282px 1fr;
  column-gap: 26.5px;
`

const QuoteCell = styled.div`
  display: flex;
  align-items: center;
  justify-content: space-between;
  white-space: nowrap;
`

const QuoteLabel = styled.div`
  display: flex;
  align-items: center;
  padding-bottom: 5px;
  font-size: 46px;
  color: #666;
  svg {
    margin: 1px 0 0 1px;
  }
`

const Sup = styled.sup`
  font-size: 23px;
  line-height: 23px;
  margin: -40px -3px 0 2px;
`

const QuoteValue = styled.div`
  font-family: ${latin};
  font-size: ${({ $small }) => ($small ? '43.5px' : '47.5px')};
  line-height: 54px;
  letter-spacing: ${({ $tight }) => ($tight ? '-1.8px' : '-0.9px')};
  color: ${({ $color }) => $color || '#222'};
`

const MoreButton = styled.button`
  justify-self: end;
  align-self: center;
  width: 134px;
  height: 59px;
  padding: 0 0 7px;
  border: 2px solid #e3e3e3;
  border-radius: 8px;
  background: #fff;
  font-family: ${cjk};
  font-size: 39px;
  line-height: 48px;
  color: #222;
`

const Periods = styled.nav`
  height: 113px;
  border-bottom: 2px solid #d9d9d9;
  padding-right: 37px;
  display: flex;
  align-items: center;
`

const Period = styled.div`
  width: ${({ $wide }) => ($wide ? '210px' : '188px')};
  height: 110px;
  padding-bottom: 5px;
  display: flex;
  align-items: center;
  justify-content: center;
  font-size: 48px;
  color: ${({ $active }) => ($active ? ORANGE : '#666')};
  background: ${({ $active }) =>
    $active ? `linear-gradient(${ORANGE}, ${ORANGE}) center bottom 8px / 65px 7px no-repeat` : 'none'};
`

const GearBox = styled.div`
  margin-left: auto;
`

const IndicatorRow = styled.div`
  height: 68px;
  padding: 0 16px 2px;
  display: flex;
  align-items: center;
`

const SmallButton = styled.button`
  width: ${({ $w }) => $w};
  height: 50px;
  padding: ${({ $start }) => ($start ? '0 0 5px 5px' : '0 0 5px')};
  border: 2px solid #e3e5ea;
  border-radius: 9px;
  background: #f7f8fb;
  font-family: ${cjk};
  font-size: 38.5px;
  line-height: 44px;
  color: #222;
  display: flex;
  align-items: center;
  justify-content: ${({ $start }) => ($start ? 'flex-start' : 'center')};
`

const Indicator = styled.div`
  display: flex;
  align-items: center;
  gap: 10px;
  margin-left: ${({ $left }) => $left || 0};
  font-family: ${latin};
  font-size: 40px;
  line-height: 46px;
  letter-spacing: ${({ $loose }) => ($loose ? '0' : '-0.9px')};
  white-space: nowrap;
  color: ${({ $color }) => $color};
`

const Corner = styled.i`
  align-self: flex-end;
  margin: 0 0 1px 9px;
  border-left: 13px solid transparent;
  border-bottom: 13px solid #222;
`

const ButtonGroup = styled.div`
  display: flex;
  margin-left: auto;
  gap: 39px;
`

const ChartBox = styled.div`
  padding: 0 12px;
`

const VolumeRow = styled.div`
  height: 68px;
  padding: 0 12px 0 17px;
  display: flex;
  align-items: center;
`

const Collapse = styled.div`
  width: 49px;
  height: 66px;
  margin: 2px 0 0 auto;
  border-radius: 14px 0 0 14px;
  background: #999;
  display: flex;
  align-items: center;
  justify-content: center;
`

const Axis = styled.div`
  height: 93px;
  margin: 0 12px;
  background: #f7f8fa;
`

const AxisLabels = styled.div`
  display: flex;
  padding-left: 5px;
`

const AxisLabel = styled.span`
  width: 176px;
  margin-left: ${({ $left }) => $left || 0};
  font-family: ${latin};
  font-size: 41px;
  line-height: 36px;
  letter-spacing: -1px;
  color: #666;
`

const AskSection = styled.section`
  height: 208px;
  padding: 33px 39px 0 40px;
  background: linear-gradient(#fff2ee, #fff 180px);
`

const AskCard = styled.div`
  height: 123px;
  padding: 0 23px 0 22px;
  border: 3px solid transparent;
  border-radius: 26px;
  background: linear-gradient(#fff, #fff) padding-box, linear-gradient(#f5c8c0, #dfe5f2) border-box;
  display: flex;
  align-items: center;
`

const AskText = styled.div`
  flex: 1;
  margin-left: 30px;
  padding-bottom: 6px;
  font-size: 46.2px;
  white-space: nowrap;
  color: #999;
`

const Dots = styled.span`
  margin-left: 2px;
  letter-spacing: 2.5px;
`

const AskButton = styled.div`
  width: 91px;
  height: 91px;
  border-radius: 50%;
  background: linear-gradient(45deg, #ff5500 40%, #ff9440);
  display: flex;
  align-items: center;
  justify-content: center;
`

const Notice = styled.div`
  height: 98px;
  margin: 0 20px;
  padding: 0 41px 0 32px;
  border-radius: 49px;
  background: #fcece3;
  display: flex;
  align-items: center;
`

const NoticeText = styled.div`
  flex: 1;
  margin-left: 58px;
  padding-bottom: 5px;
  font-size: 42px;
  color: #dd5a14;
`

const NoticeDivider = styled.i`
  width: 1.5px;
  height: 40px;
  margin-right: 18px;
  background: #dd5a14;
`

const Sections = styled.nav`
  height: 116px;
  margin-top: 18px;
  padding: 0 36px 0 36px;
  border-top: 2px solid #d9d9d9;
  border-bottom: 2px solid #d9d9d9;
  display: flex;
`

const Section = styled.div`
  flex: 1;
  padding-bottom: 6px;
  display: flex;
  align-items: center;
  justify-content: center;
  font-size: 47.5px;
  color: ${({ $active }) => ($active ? ORANGE : '#666')};
  background: ${({ $active }) =>
    $active ? `linear-gradient(${ORANGE}, ${ORANGE}) center bottom 9px / 65px 7px no-repeat` : 'none'};
`

const Cards = styled.div`
  height: 138px;
  padding: 12px 31px 0 40px;
  display: flex;
  gap: 20px;
  overflow: hidden;
`

const Card = styled.div`
  position: relative;
  flex: 1;
  height: 240px;
  border-radius: 28px;
  background: #fff9f7;
  overflow: hidden;
`

const CardArt = styled.div`
  position: absolute;
  top: 0;
  right: 0;
`

const CardHead = styled.div`
  position: relative;
  height: 60px;
  margin: 29px 0 0 25px;
  display: flex;
  align-items: center;
`

const CardTitle = styled.h2`
  margin: 0 16px 0 14px;
  padding-bottom: 6px;
  font-size: 45.5px;
  font-weight: 500;
  line-height: 60px;
  color: #222;
`

const RankLine = styled.div`
  position: relative;
  margin: 17px 0 0 28px;
  font-size: 39.2px;
  line-height: 48px;
  color: #666;
  b {
    font-family: ${latin};
    color: #d9481c;
  }
`

const VoteBar = styled.div`
  position: relative;
  height: 40px;
  margin: 25px 30px 0 29px;
  border-radius: 10px;
  overflow: hidden;
  display: flex;
  gap: 5px;
`

const Vote = styled.div`
  flex: ${({ $grow }) => $grow};
  background: ${({ $color }) => $color};
  transform: skewX(-5deg) scaleX(1.01);
`

const Nav = styled.nav`
  height: 188px;
  border-top: 2px solid #d6d6d6;
  background: #f7f8fa;
  display: flex;
`

const IndexBox = styled.div`
  width: 298px;
  padding-top: 10px;
  display: flex;
  flex-direction: column;
  align-items: center;
`

const UpMark = styled.i`
  border: 11px solid transparent;
  border-top: 0;
  border-bottom: 8px solid #777;
`

const IndexValue = styled.div`
  margin-top: 5px;
  font-family: ${latin};
  font-size: 45px;
  line-height: 60px;
  letter-spacing: -1.6px;
  color: #dd3333;
`

const IndexRow = styled.div`
  width: 298px;
  padding: 0 13px 0 44px;
  display: flex;
  justify-content: space-between;
  font-size: 38px;
  line-height: 50px;
  color: #666;
`

const IndexName = styled.span`
  line-height: 46px;
`

const IndexChange = styled.span`
  font-family: ${latin};
  font-size: 41.5px;
  letter-spacing: -1.2px;
  color: #dd3333;
`

const NavItem = styled.div`
  width: 240.5px;
  display: flex;
  flex-direction: column;
  align-items: center;
  font-size: 38px;
  line-height: 48px;
  color: #666;
`

const NavIcon = styled.div`
  height: 84px;
  margin-bottom: 3px;
  display: flex;
  align-items: center;
`

export default App
